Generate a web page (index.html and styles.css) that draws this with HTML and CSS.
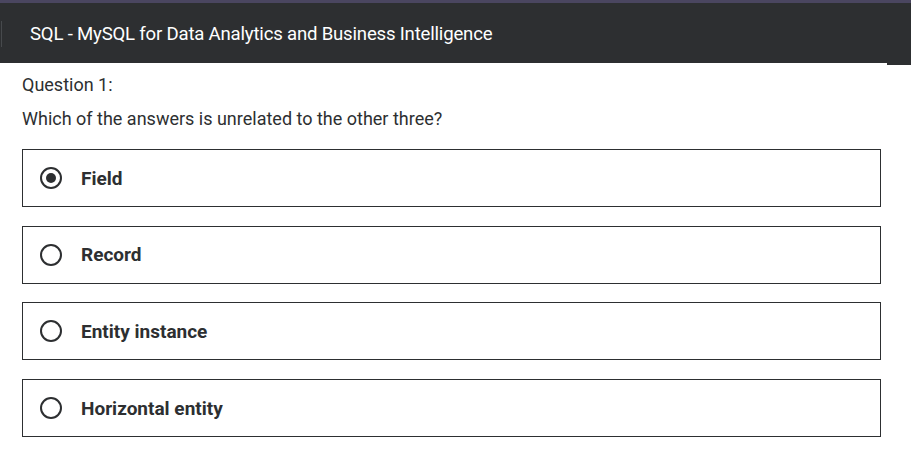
FILE: index.html
```html
<!DOCTYPE html>
<html>
<head>
<meta charset="utf-8">
<link rel="stylesheet" href="styles.css">
</head>
<body>
<div class="topline"></div>
<header class="header">
  <span class="divider"></span>
  <h1 class="title">SQL - MySQL for Data Analytics and Business Intelligence</h1>
  <span class="tab"></span>
</header>
<main class="content">
  <p class="qnum">Question 1:</p>
  <p class="qtext">Which of the answers is unrelated to the other three?</p>
  <ul class="options">
    <li class="option"><span class="radio checked"></span><span class="label">Field</span></li>
    <li class="option"><span class="radio"></span><span class="label">Record</span></li>
    <li class="option"><span class="radio"></span><span class="label">Entity instance</span></li>
    <li class="option"><span class="radio"></span><span class="label">Horizontal entity</span></li>
  </ul>
</main>
</body>
</html>
```
FILE: styles.css
```css
* { box-sizing: border-box; }
html, body { margin: 0; padding: 0; background: #fff; }
body { font-family: Roboto, "Liberation Sans", sans-serif; color: #2d2f31; width: 911px; height: 457px; overflow: hidden; }
.topline { height: 3px; background: #4a4660; }
.header {
  position: relative;
  height: 60px;
  background: #2d2f31;
  display: flex;
  align-items: center;
  padding: 2px 0 0 30px;
}
.divider { position: absolute; left: 1px; top: 18px; width: 1px; height: 26px; background: #474a4d; }
.title { margin: 0; font-size: 18.6px; font-weight: 400; color: #fff; letter-spacing: -0.2px; }
.tab { position: absolute; right: 0; bottom: -2px; width: 24px; height: 2px; background: #2d2f31; }
.content { padding: 0 30px 0 22px; }
.qnum { margin: 11px 0 0; font-size: 18px; line-height: 22px; }
.qtext { margin: 12px 0 0; font-size: 18px; line-height: 22px; }
.options { list-style: none; margin: 19px 0 0; padding: 0; display: flex; flex-direction: column; gap: 18.7px; width: 859px; }
.option { height: 58px; border: 1px solid #2d2f31; display: flex; align-items: center; padding-left: 17px; }
.radio { width: 22px; height: 22px; border: 2px solid #2d2f31; border-radius: 50%; display: flex; align-items: center; justify-content: center; margin-right: 19px; flex: none; }
.radio.checked::after { content: ""; width: 10px; height: 10px; border-radius: 50%; background: #2d2f31; }
.label { font-size: 19px; font-weight: 700; }
```
